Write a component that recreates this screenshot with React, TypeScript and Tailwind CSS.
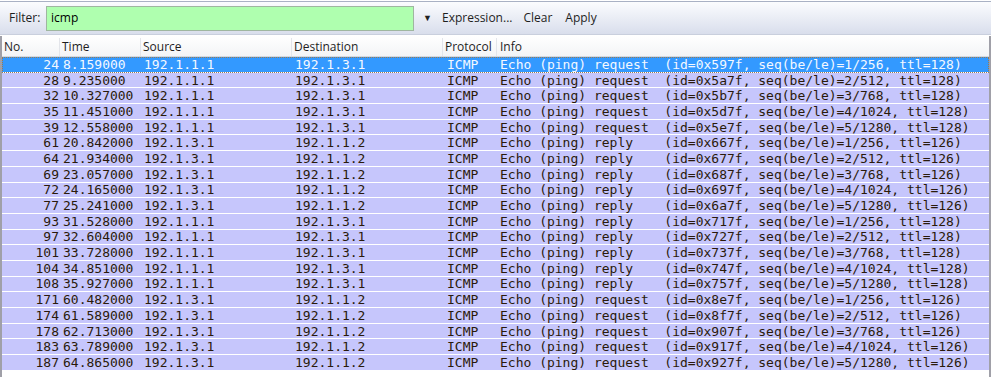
import React from 'react';

type Packet = { no: number; time: string; src: string; dst: string; info: string };

const req = (id: string, seq: string, ttl: number) =>
  `Echo (ping) request  (id=${id}, seq(be/le)=${seq}, ttl=${ttl})`;
const rep = (id: string, seq: string, ttl: number) =>
  `Echo (ping) reply    (id=${id}, seq(be/le)=${seq}, ttl=${ttl})`;

const A = '192.1.1.1';
const B = '192.1.3.1';
const C = '192.1.1.2';

const packets: Packet[] = [
  { no: 24, time: '8.159000', src: A, dst: B, info: req('0x597f', '1/256', 128) },
  { no: 28, time: '9.235000', src: A, dst: B, info: req('0x5a7f', '2/512', 128) },
  { no: 32, time: '10.327000', src: A, dst: B, info: req('0x5b7f', '3/768', 128) },
  { no: 35, time: '11.451000', src: A, dst: B, info: req('0x5d7f', '4/1024', 128) },
  { no: 39, time: '12.558000', src: A, dst: B, info: req('0x5e7f', '5/1280', 128) },
  { no: 61, time: '20.842000', src: B, dst: C, info: rep('0x667f', '1/256', 126) },
  { no: 64, time: '21.934000', src: B, dst: C, info: rep('0x677f', '2/512', 126) },
  { no: 69, time: '23.057000', src: B, dst: C, info: rep('0x687f', '3/768', 126) },
  { no: 72, time: '24.165000', src: B, dst: C, info: rep('0x697f', '4/1024', 126) },
  { no: 77, time: '25.241000', src: B, dst: C, info: rep('0x6a7f', '5/1280', 126) },
  { no: 93, time: '31.528000', src: A, dst: B, info: rep('0x717f', '1/256', 128) },
  { no: 97, time: '32.604000', src: A, dst: B, info: rep('0x727f', '2/512', 128) },
  { no: 101, time: '33.728000', src: A, dst: B, info: rep('0x737f', '3/768', 128) },
  { no: 104, time: '34.851000', src: A, dst: B, info: rep('0x747f', '4/1024', 128) },
  { no: 108, time: '35.927000', src: A, dst: B, info: rep('0x757f', '5/1280', 128) },
  { no: 171, time: '60.482000', src: B, dst: C, info: req('0x8e7f', '1/256', 126) },
  { no: 174, time: '61.589000', src: B, dst: C, info: req('0x8f7f', '2/512', 126) },
  { no: 178, time: '62.713000', src: B, dst: C, info: req('0x907f', '3/768', 126) },
  { no: 183, time: '63.789000', src: B, dst: C, info: req('0x917f', '4/1024', 126) },
  { no: 187, time: '64.865000', src: B, dst: C, info: req('0x927f', '5/1280', 126) },
];

const ui = { fontFamily: '"Open Sans", "Noto Sans", sans-serif' };
const mono = { fontFamily: '"DejaVu Sans Mono", monospace' };

const App: React.FC = () => {
  return (
    <div className="w-[991px] h-[377px] overflow-hidden bg-white flex flex-col">
      {/* Top edge */}
      <div className="h-[2px] bg-white border-b border-[#a9b1c4]" />

      {/* Filter toolbar */}
      <div
        className="h-[33px] flex items-center bg-gradient-to-b from-[#fbfcfe] to-[#d9deec] border-b border-[#c9cfdd] text-[12px] text-[#1e1e1e]"
        style={ui}
      >
        <span className="ml-[9px] w-[37px]">Filter:</span>
        <div className="w-[368px] h-[25px] bg-[#afffaf] border border-[#9fb6a0] flex items-center pl-[4px] text-black">
          icmp
        </div>
        <span className="ml-[9px] w-[18px] text-[9px] text-[#222]">▼</span>
        <span className="ml-[1px]">Expression...</span>
        <span className="ml-[11px]">Clear</span>
        <span className="ml-[13px]">Apply</span>
      </div>

      {/* Packet list */}
      <div className="flex-1 border-l-2 border-r-2 border-[#a0a0a8] mt-[1px]">
        <div
          className="h-[21px] flex items-center pt-[2px] bg-gradient-to-b from-white to-[#f3f4f6] border-b border-[#d5d8de] text-[12px] text-[#1e1e1e]"
          style={ui}
        >
          <div className="w-[58px] pl-[2px] h-full flex items-center border-r border-[#e3e5ea]">No.</div>
          <div className="w-[81px] pl-[2px] h-full flex items-center border-r border-[#e3e5ea]">Time</div>
          <div className="w-[151px] pl-[2px] h-full flex items-center border-r border-[#e3e5ea]">Source</div>
          <div className="w-[151px] pl-[2px] h-full flex items-center border-r border-[#e3e5ea]">Destination</div>
          <div className="w-[54px] pl-[2px] h-full flex items-center border-r border-[#e3e5ea]">Protocol</div>
          <div className="flex-1 pl-[3px] h-full flex items-center">Info</div>
        </div>

        <div className="text-[13px]" style={mono}>
          {packets.map((p, i) => {
            const selected = i === 0;
            return (
              <div
                key={p.no}
                className={`h-[15.7px] flex items-center whitespace-pre border-b border-white leading-none ${
                  selected
                    ? 'bg-[#3399ff] text-[#f4f8ff] outline outline-1 outline-dotted outline-[#9a7a50] -outline-offset-1'
                    : 'bg-[#c6c6fc] text-[#2a1a0a]'
                }`}
              >
                <div className="w-[58px] text-right pr-[1px]">{p.no}</div>
                <div className="w-[81px] pl-[3px]">{p.time}</div>
                <div className="w-[151px] pl-[3px]">{p.src}</div>
                <div className="w-[151px] pl-[3px]">{p.dst}</div>
                <div className="w-[54px] pl-[4px]">ICMP</div>
                <div className="flex-1 pl-[3px]">{p.info}</div>
              </div>
            );
          })}
        </div>
      </div>
    </div>
  );
};

export default App;
